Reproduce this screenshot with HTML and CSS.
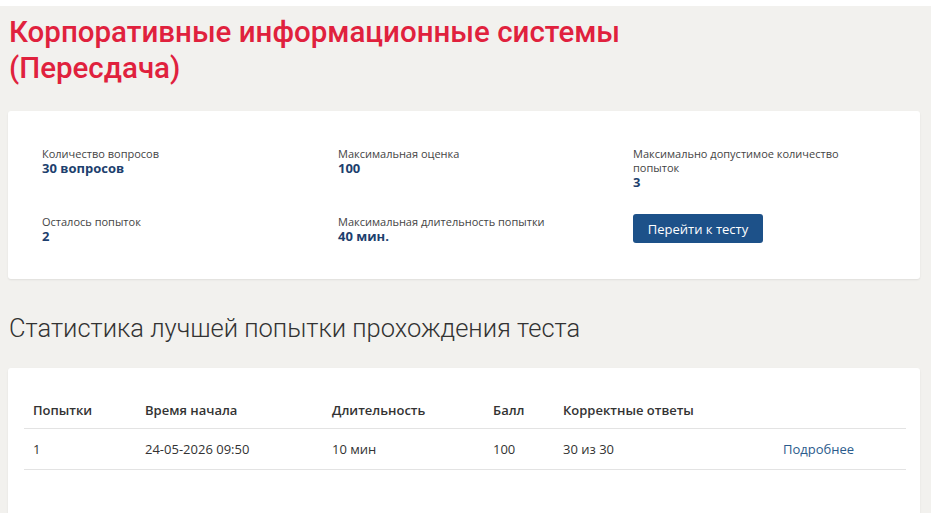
FILE: index.html
```html
<!DOCTYPE html>
<html lang="ru">
<head>
<meta charset="utf-8">
<title>Корпоративные информационные системы</title>
<link rel="stylesheet" href="styles.css">
</head>
<body>
<div class="page">
  <h1 class="title">Корпоративные информационные системы<br>(Пересдача)</h1>

  <section class="card info">
    <div class="info-grid">
      <div class="item">
        <div class="label">Количество вопросов</div>
        <div class="value">30 вопросов</div>
      </div>
      <div class="item">
        <div class="label">Максимальная оценка</div>
        <div class="value">100</div>
      </div>
      <div class="item">
        <div class="label">Максимально допустимое количество попыток</div>
        <div class="value">3</div>
      </div>
      <div class="item">
        <div class="label">Осталось попыток</div>
        <div class="value">2</div>
      </div>
      <div class="item">
        <div class="label">Максимальная длительность попытки</div>
        <div class="value">40 мин.</div>
      </div>
      <div class="item">
        <button class="btn" type="button">Перейти к тесту</button>
      </div>
    </div>
  </section>

  <h2 class="subtitle">Статистика лучшей попытки прохождения теста</h2>

  <section class="card stats">
    <table class="table">
      <thead>
        <tr>
          <th class="c1">Попытки</th>
          <th class="c2">Время начала</th>
          <th class="c3">Длительность</th>
          <th class="c4">Балл</th>
          <th class="c5">Корректные ответы</th>
          <th class="c6"></th>
        </tr>
      </thead>
      <tbody>
        <tr>
          <td>1</td>
          <td>24-05-2026 09:50</td>
          <td>10 мин</td>
          <td>100</td>
          <td>30 из 30</td>
          <td><a class="more" href="#">Подробнее</a></td>
        </tr>
      </tbody>
    </table>
  </section>
</div>
</body>
</html>
```

FILE: styles.css
```css
* { box-sizing: border-box; }
html, body { margin: 0; padding: 0; background: #ffffff; }
body { font-family: "Open Sans", "Noto Sans", sans-serif; color: #333; }

.page {
  width: 931px;
  margin-top: 6px;
  background: #f2f1ee;
  padding: 8px 11px 0 8px;
  min-height: 507px;
}

.title {
  margin: 0 0 0 1px;
  font-family: Roboto, "Noto Sans", sans-serif;
  font-weight: 500;
  font-size: 29.5px;
  line-height: 36px;
  color: #e0213d;
}

.card {
  background: #fff;
  border-radius: 3px;
  box-shadow: 0 1px 2px rgba(0,0,0,0.08);
}

.info {
  margin-top: 25px;
  padding: 36px 34px 36px 34px;
}

.info-grid {
  display: grid;
  grid-template-columns: 296px 295px 1fr;
  row-gap: 26px;
  align-items: start;
}

.item:nth-child(3) { padding-right: 40px; }

.label {
  font-size: 11px;
  line-height: 14px;
  color: #444;
}

.value {
  font-size: 13px;
  line-height: 14px;
  font-weight: 700;
  color: #1d3f6e;
}

.btn {
  display: block;
  margin-top: -1px;
  background: #1d5189;
  color: #fff;
  border: 0;
  border-radius: 3px;
  height: 29px;
  width: 130px;
  font-family: "Open Sans", sans-serif;
  font-size: 13px;
  padding: 0;
}

.subtitle {
  margin: 34px 0 0 1px;
  font-family: Roboto, "Noto Sans", sans-serif;
  font-weight: 300;
  font-size: 25.5px;
  line-height: 30px;
  color: #333;
}

.stats {
  margin-top: 25px;
  padding: 27px 14px 40px 16px;
  min-height: 160px;
}

.table {
  width: 100%;
  border-collapse: collapse;
  font-size: 13px;
  color: #333;
}

.table th {
  text-align: left;
  font-weight: 600;
  padding: 6px 9px 9px;
  border-bottom: 1px solid #e3e3e3;
}

.table td {
  padding: 11px 9px 11px;
  border-bottom: 1px solid #e3e3e3;
}

.c1 { width: 112px; }
.c2 { width: 187px; }
.c3 { width: 161px; }
.c4 { width: 70px; }
.c5 { width: 220px; }

.more {
  color: #2b5b8c;
  text-decoration: none;
}
```
